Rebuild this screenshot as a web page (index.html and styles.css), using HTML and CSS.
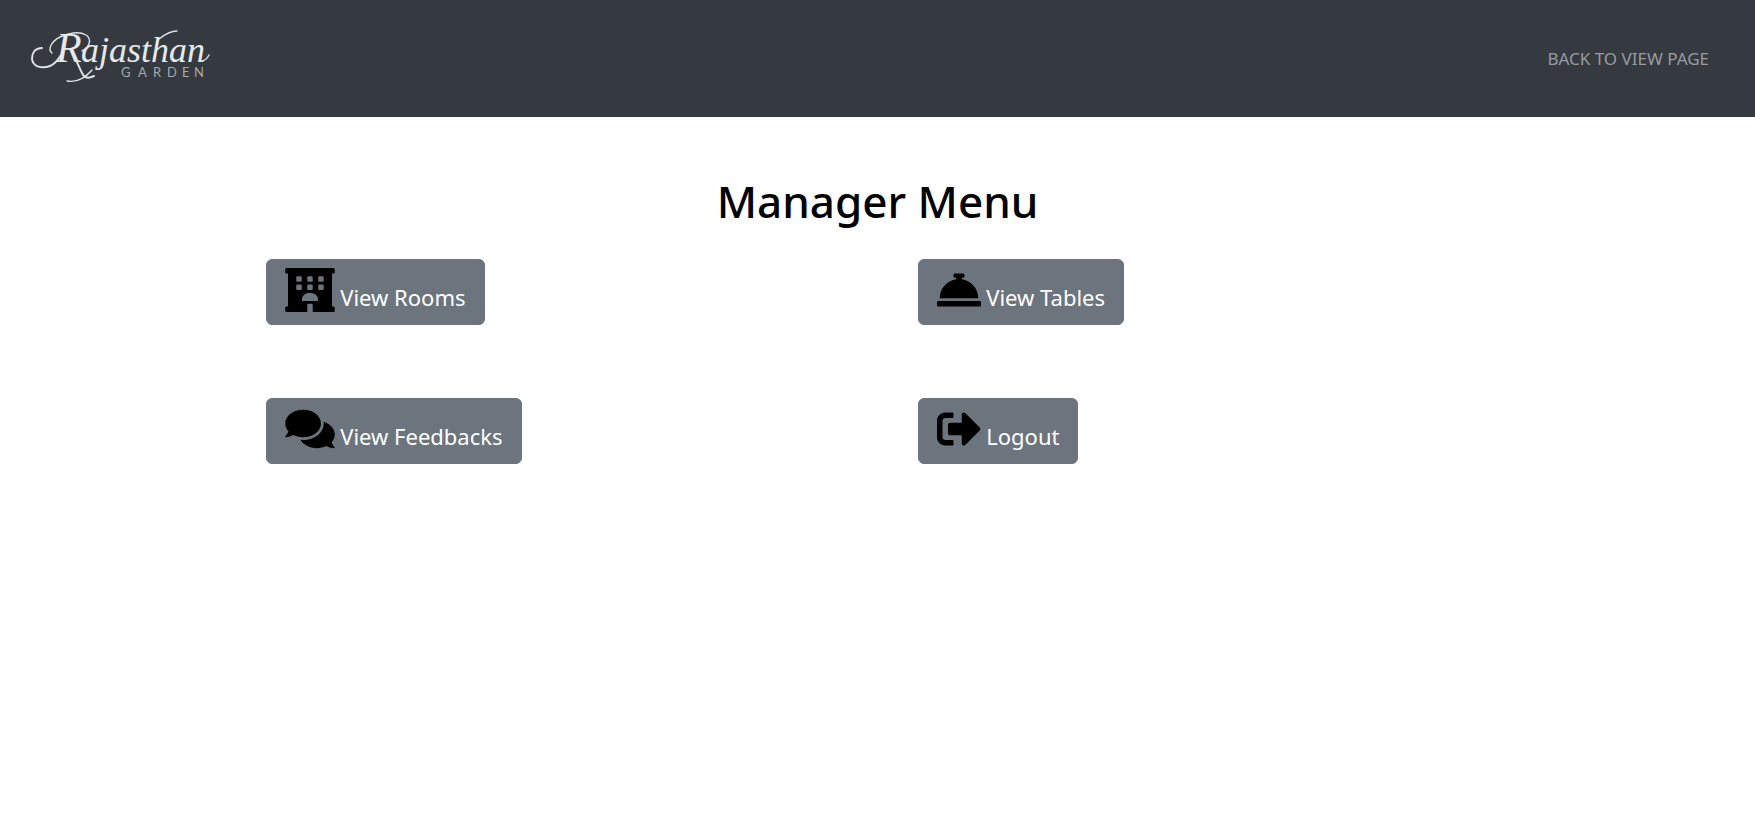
FILE: index.html
```
<!DOCTYPE html>
<html lang="en">
<head>
<meta charset="utf-8">
<meta name="viewport" content="width=device-width, initial-scale=1">
<title>Manager Menu</title>
<link rel="stylesheet" href="styles.css">
</head>
<body>
<header class="navbar">
  <a class="brand" href="#" aria-label="Rajasthan Garden">
    <svg class="logo" viewBox="0 0 184 61" role="img">
      <g class="logo-swash">
        <path class="heavy" d="M10 20C3 20 0 25 0 31C1 39 10 41 18 38C23 36 26 32 29 27"/>
        <path d="M20 25C15 21 20 13 28 9C36 5 47 3 54 7C60 11 58 19 50 23"/>
        <path class="heavy" d="M45 34C48 41 50 46 52 48C54 50 58 50 62 48"/>
        <path d="M60 42C54 49 46 55 35 53"/>
        <path d="M127 11C132 7 138 3 145 3"/>
        <path d="M169 33C172 33 175 31 177 27"/>
      </g>
      <text class="logo-script" y="34"><tspan class="logo-initial" x="24">R</tspan><tspan x="49">ajasthan</tspan></text>
      <text class="logo-caps" x="89 106 121 135 150 162" y="49">GARDEN</text>
    </svg>
  </a>
  <nav><a class="nav-link" href="#">BACK TO VIEW PAGE</a></nav>
</header>
<main class="container">
  <h1 class="title">Manager Menu</h1>
  <div class="menu">
    <div class="cell">
      <button class="btn" type="button"><svg class="icon wide" viewBox="0 0 576 512" aria-hidden="true"><path fill-rule="evenodd" d="M560 64c8.800 0 16-7.200 16-16V16c0-8.800-7.200-16-16-16H16C7.200 0 0 7.200 0 16v32c0 8.800 7.200 16 16 16h16v384H16c-8.800 0-16 7.200-16 16v32c0 8.800 7.200 16 16 16h240v-80c0-8.800 7.200-16 16-16h32c8.800 0 16 7.200 16 16v80h240c8.800 0 16-7.200 16-16v-32c0-8.800-7.200-16-16-16h-16V64zM141 96h38q13 0 13 13v38q0 13-13 13h-38q-13 0-13-13v-38q0-13 13-13zM269 96h38q13 0 13 13v38q0 13-13 13h-38q-13 0-13-13v-38q0-13 13-13zM397 96h38q13 0 13 13v38q0 13-13 13h-38q-13 0-13-13v-38q0-13 13-13zM141 192h38q13 0 13 13v38q0 13-13 13h-38q-13 0-13-13v-38q0-13 13-13zM269 192h38q13 0 13 13v38q0 13-13 13h-38q-13 0-13-13v-38q0-13 13-13zM397 192h38q13 0 13 13v38q0 13-13 13h-38q-13 0-13-13v-38q0-13 13-13zM208 384q-16 0-16-16a96 80 0 0 1 192 0q0 16-16 16z"/></svg> View Rooms</button>
    </div>
    <div class="cell">
      <button class="btn" type="button"><svg class="icon" viewBox="0 0 512 512" aria-hidden="true"><path d="M288 130.540V112h16c8.840 0 16-7.160 16-16V80c0-8.840-7.160-16-16-16h-96c-8.840 0-16 7.160-16 16v16c0 8.840 7.160 16 16 16h16v18.540C115.490 146.110 32 239.180 32 352h448c0-112.820-83.490-205.890-192-221.460zM496 384H16c-8.840 0-16 7.160-16 16v32c0 8.840 7.160 16 16 16h480c8.840 0 16-7.160 16-16v-32c0-8.840-7.160-16-16-16z"/></svg> View Tables</button>
    </div>
    <div class="cell">
      <button class="btn" type="button"><svg class="icon wide" viewBox="0 0 576 512" aria-hidden="true"><path d="M416 192c0-88.400-93.100-160-208-160S0 103.600 0 192c0 34.300 14.100 65.900 38 92-13.400 30.200-35.500 54.200-35.800 54.500-2.200 2.300-2.800 5.700-1.500 8.700S4.800 352 8 352c36.600 0 66.900-12.300 88.700-25 32.200 15.700 70.300 25 111.300 25 114.900 0 208-71.600 208-160zm122 220c23.900-26 38-57.700 38-92 0-66.900-53.500-124.200-129.300-148.100.9 6.600 1.300 13.300 1.300 20.100 0 105.900-107.700 192-240 192-10.800 0-21.300-.8-31.700-1.900C207.800 439.600 281.800 480 368 480c41 0 79.100-9.200 111.300-25 21.800 12.700 52.100 25 88.700 25 3.200 0 6.100-1.900 7.300-4.800 1.300-2.900.7-6.300-1.500-8.700-.3-.3-22.400-24.200-35.800-54.500z"/></svg> View Feedbacks</button>
    </div>
    <div class="cell">
      <button class="btn" type="button"><svg class="icon" viewBox="0 0 512 512" aria-hidden="true"><path d="M497 273L329 441c-15 15-41 4.500-41-17v-96H152c-13.300 0-24-10.700-24-24v-96c0-13.300 10.700-24 24-24h136V88c0-21.400 25.900-32 41-17l168 168c9.300 9.400 9.300 24.600 0 34zM192 436v-40c0-6.600-5.400-12-12-12H96c-17.700 0-32-14.300-32-32V160c0-17.700 14.300-32 32-32h84c6.600 0 12-5.400 12-12V76c0-6.600-5.400-12-12-12H96c-53 0-96 43-96 96v192c0 53 43 96 96 96h84c6.600 0 12-5.400 12-12z"/></svg> Logout</button>
    </div>
  </div>
</main>
</body>
</html>
```
FILE: styles.css
```
* { box-sizing: border-box; }
body {
  margin: 0;
  background: #fff;
  color: #000;
  font-family: "Segoe UI", "Noto Sans", "Open Sans", sans-serif;
}
.navbar {
  display: flex;
  align-items: center;
  justify-content: space-between;
  padding: 28px 46px 28px 32px;
  background: #343a40;
}
.brand { display: block; text-decoration: none; }
.logo { display: block; width: 184px; height: 61px; overflow: visible; }
.logo-swash path {
  fill: none;
  stroke: #dfe2e4;
  stroke-width: 1.4;
  stroke-linecap: round;
}
.logo-swash .heavy { stroke-width: 2; }
.logo-script {
  fill: #e6e8ea;
  font: italic 36px "Liberation Serif", serif;
}
.logo-initial { font-size: 42px; }
.logo-caps {
  fill: #a5a9ad;
  font: 13px Lato, sans-serif;
}
.nav-link {
  color: #999c9f;
  font-size: 17px;
  line-height: 24px;
  text-decoration: none;
}
.container { max-width: 1304px; margin: 0 auto; padding-top: 55px; }
.title {
  margin: 0 0 29px;
  font-size: 44px;
  font-weight: 500;
  line-height: 58px;
  text-align: center;
}
.menu {
  display: grid;
  grid-template-columns: 1fr 1fr;
  row-gap: 73px;
}
.cell { padding-left: 40px; }
.btn {
  padding: 8px 18px 9px;
  border: 1px solid #6c757d;
  border-radius: 6px;
  background: #6c757d;
  color: #fff;
  font-family: inherit;
  font-size: 22px;
  line-height: 36px;
  white-space: nowrap;
}
.icon { width: 44px; height: 44px; vertical-align: -6px; fill: #000; }
.icon.wide { width: 50px; }
```
